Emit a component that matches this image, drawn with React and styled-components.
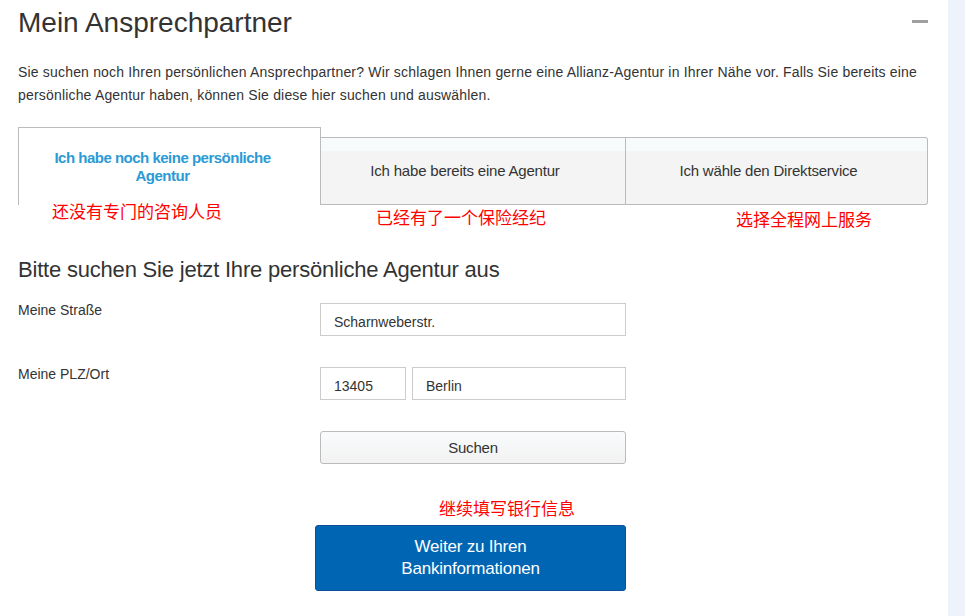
import React from 'react';
import styled, { createGlobalStyle } from 'styled-components';

const GlobalStyle = createGlobalStyle`
  html, body { margin: 0; padding: 0; background: #fff; }
  body { font-family: "Liberation Sans", Arial, sans-serif; color: #333; }
  * { box-sizing: border-box; }
`;

const Page = styled.div`
  display: flex;
  width: 965px;
  height: 616px;
  overflow: hidden;
`;

const Main = styled.main`
  flex: none;
  width: 948px;
  background: #fff;
  padding: 6px 20px 0 18px;
`;

const Side = styled.aside`
  flex: 1;
  background: #eef2fb;
`;

const Header = styled.header`
  display: flex;
  justify-content: space-between;
  align-items: flex-start;
`;

const Title = styled.h1`
  margin: 0;
  font-weight: 400;
  font-size: 28px;
  line-height: 34px;
  color: #333;
`;

const Collapse = styled.button`
  width: 16px;
  height: 3px;
  margin-top: 14px;
  padding: 0;
  border: 0;
  background: #a0a0a0;
`;

const Intro = styled.p`
  margin: 21px 0 0;
  font-size: 14px;
  line-height: 23px;
  letter-spacing: 0.18px;
  color: #333;
`;

const Tabs = styled.div`
  display: flex;
  align-items: flex-end;
  margin-top: 20px;
`;

const Tab = styled.div`
  display: flex;
  align-items: center;
  justify-content: center;
  text-align: center;
  width: ${p => p.$w}px;
  border: 1px solid #bbb;
  ${p => p.$active ? `
    height: 78px;
    border-bottom: none;
    background: #fff;
    color: #2b9ad5;
    font-weight: 700;
    font-size: 15px;
    line-height: 18px;
    letter-spacing: -0.5px;
    padding: 0 44px 0 30px;
  ` : `
    height: 68px;
    border-left: none;
    background: linear-gradient(#f8fbfc 0, #f8fbfc 13px, #f4f4f4 13px);
    color: #333;
    font-size: 15px;
    line-height: 18px;
    letter-spacing: -0.2px;
    padding: 0 16px 0 0;
  `}
  ${p => p.$last && 'border-radius: 0 3px 3px 0;'}
`;

const Notes = styled.div`
  display: grid;
  grid-template-columns: 303px 305px 302px;
  align-items: start;
`;

const Note = styled.span`
  display: block;
  color: #f00;
  font-family: "Noto Sans CJK SC", sans-serif;
  font-size: 17px;
  line-height: 20px;
  padding-left: ${p => p.$indent}px;
  margin-top: ${p => p.$top || 0}px;
`;

const SubTitle = styled.h2`
  margin: 27px 0 0;
  font-weight: 400;
  font-size: 22px;
  line-height: 28px;
  letter-spacing: -0.2px;
  color: #333;
`;

const Form = styled.form`
  display: grid;
  grid-template-columns: 302px 306px;
  row-gap: 31px;
  margin-top: 19px;
`;

const Label = styled.label`
  font-size: 14px;
  line-height: 14px;
  color: #333;
`;

const FieldGroup = styled.div`
  display: flex;
  gap: 6px;
`;

const Input = styled.input`
  width: ${p => p.$w || 306}px;
  height: 33px;
  border: 1px solid #ccc;
  border-radius: 0;
  padding: 5px 13px 0;
  font: 14px "Liberation Sans", Arial, sans-serif;
  color: #333;
  background: #fff;
  outline: none;
`;

const Actions = styled.div`
  grid-column: 2;
  display: flex;
  flex-direction: column;
  align-items: flex-start;
`;

const SearchButton = styled.button`
  width: 306px;
  height: 33px;
  border: 1px solid #bbb;
  border-radius: 3px;
  background: linear-gradient(#f9fbfc, #f2f2f2);
  font: 15px "Liberation Sans", Arial, sans-serif;
  letter-spacing: -0.2px;
  color: #333;
  padding: 0;
`;

const ActionNote = styled(Note)`
  margin-top: 34px;
`;

const PrimaryButton = styled.button`
  margin: 7px 0 0 -5px;
  width: 311px;
  height: 66px;
  border: 1px solid #0d4f9c;
  border-radius: 3px;
  background: #0066b3;
  color: #fff;
  font: 17px/22px "Liberation Sans", Arial, sans-serif;
  letter-spacing: -0.2px;
  padding: 0 40px;
`;

export default function App() {
  return (
    <>
      <GlobalStyle />
      <Page>
        <Main>
          <Header>
            <Title>Mein Ansprechpartner</Title>
            <Collapse aria-label="Einklappen" />
          </Header>
          <Intro>
            Sie suchen noch Ihren persönlichen Ansprechpartner? Wir schlagen Ihnen gerne eine Allianz-Agentur in Ihrer Nähe vor. Falls Sie bereits eine persönliche Agentur haben, können Sie diese hier suchen und auswählen.
          </Intro>
          <Tabs>
            <Tab $active $w={303}>Ich habe noch keine persönliche Agentur</Tab>
            <Tab $w={305}>Ich habe bereits eine Agentur</Tab>
            <Tab $w={302} $last>Ich wähle den Direktservice</Tab>
          </Tabs>
          <Notes>
            <Note $indent={34} $top={-4}>还没有专门的咨询人员</Note>
            <Note $indent={55} $top={2}>已经有了一个保险经纪</Note>
            <Note $indent={110} $top={4}>选择全程网上服务</Note>
          </Notes>
          <SubTitle>Bitte suchen Sie jetzt Ihre persönliche Agentur aus</SubTitle>
          <Form onSubmit={e => e.preventDefault()}>
            <Label htmlFor="street">Meine Straße</Label>
            <Input id="street" defaultValue="Scharnweberstr." />
            <Label htmlFor="plz">Meine PLZ/Ort</Label>
            <FieldGroup>
              <Input id="plz" $w={86} defaultValue="13405" />
              <Input $w={214} defaultValue="Berlin" />
            </FieldGroup>
            <Actions>
              <SearchButton type="button">Suchen</SearchButton>
              <ActionNote $indent={119}>继续填写银行信息</ActionNote>
              <PrimaryButton type="button">Weiter zu Ihren Bankinformationen</PrimaryButton>
            </Actions>
          </Form>
        </Main>
        <Side />
      </Page>
    </>
  );
}
